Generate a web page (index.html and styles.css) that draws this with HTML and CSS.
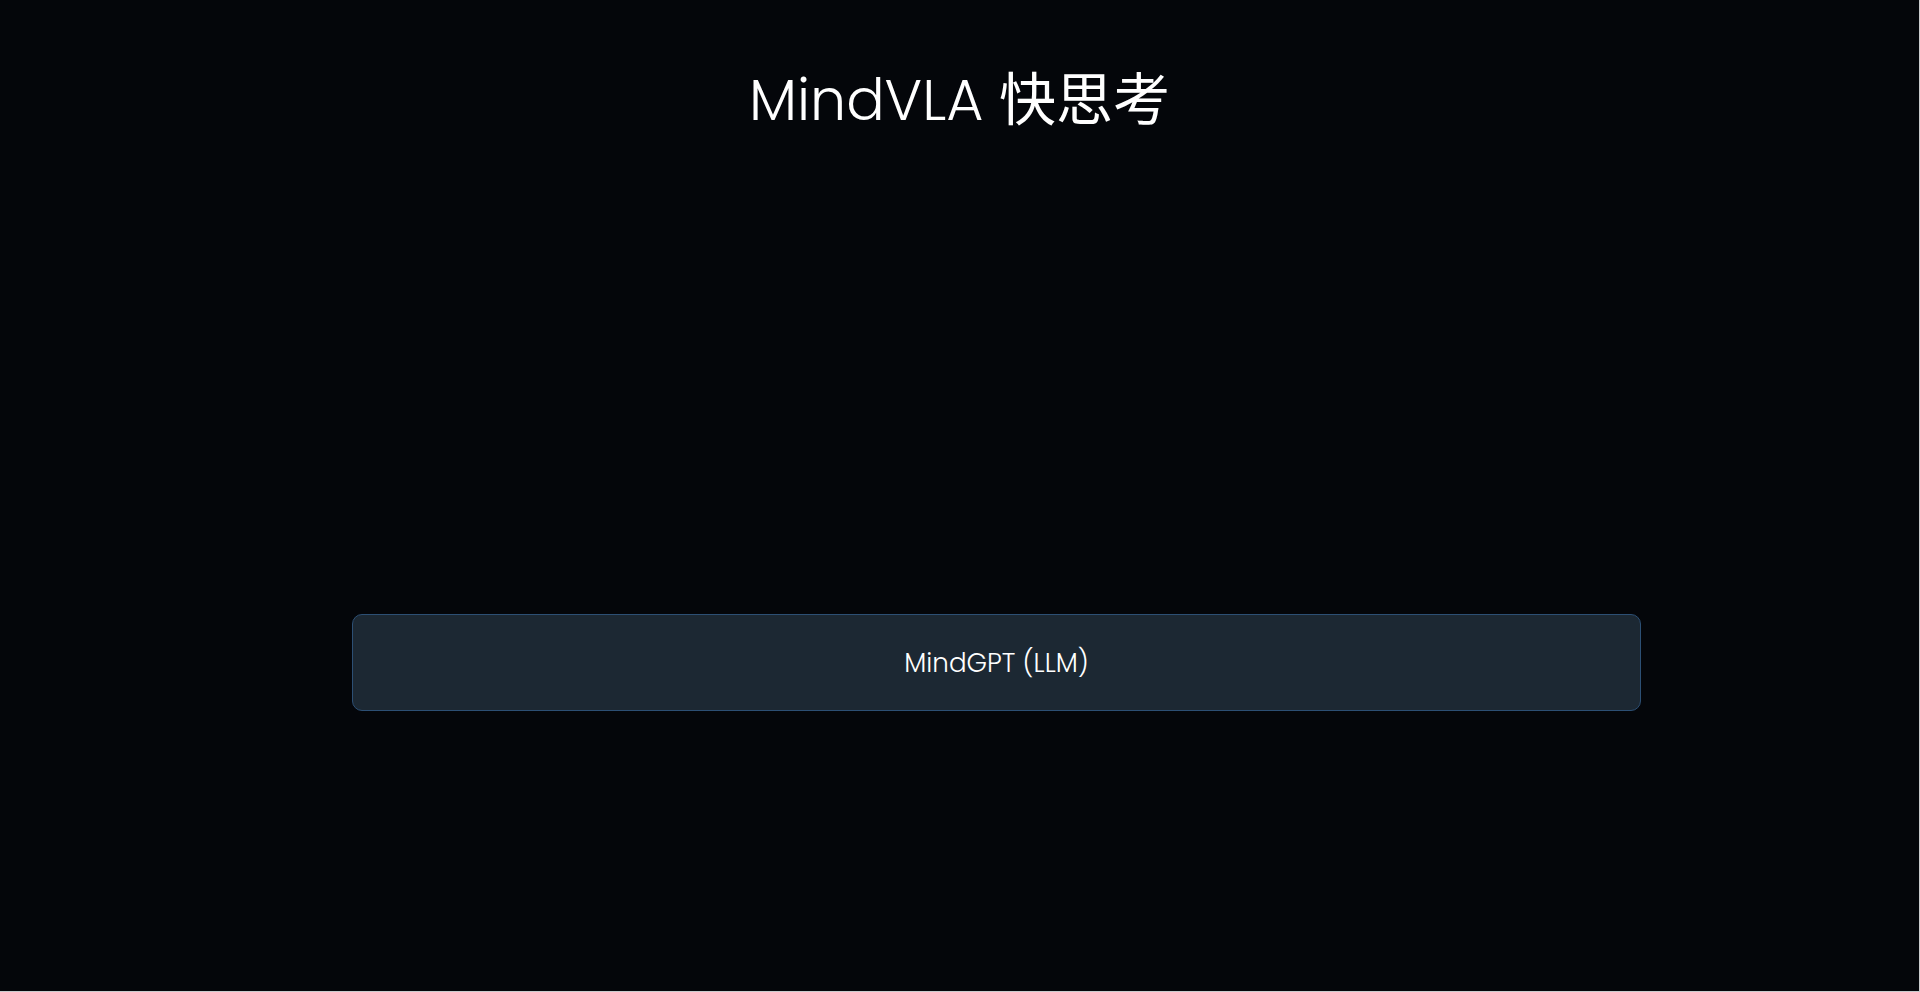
FILE: index.html
```html
<!DOCTYPE html>
<html lang="zh">
<head>
<meta charset="utf-8">
<title>MindVLA 快思考</title>
<link rel="stylesheet" href="styles.css">
</head>
<body>
<div class="page">
  <h1 class="title">MindVLA <span class="cjk">快思考</span></h1>
  <div class="stage">
    <div class="node">MindGPT (LLM)</div>
  </div>
</div>
</body>
</html>
```
FILE: styles.css
```css
html, body {
  margin: 0;
  padding: 0;
  background: #c9cbcd;
}
body {
  font-family: Poppins, "Lato", "Noto Sans CJK SC", sans-serif;
  color: #ffffff;
}
.page {
  width: 1919px;
  height: 991px;
  background: #04060a;
  display: flex;
  flex-direction: column;
  overflow: hidden;
}
.title {
  margin: 0;
  padding-top: 62px;
  height: 76px;
  text-align: center;
  font-weight: 300;
  font-size: 57px;
  line-height: 76px;
}
.cjk {
  font-family: "Noto Sans CJK SC", sans-serif;
  font-weight: 400;
  line-height: 0;
}
.stage {
  padding: 476px 278px 0 352px;
}
.node {
  box-sizing: border-box;
  height: 97px;
  background: #1c2833;
  border: 1.5px solid #2c4f74;
  border-radius: 10px;
  display: flex;
  align-items: center;
  justify-content: center;
  font-size: 26.2px;
  font-weight: 300;
}
```
